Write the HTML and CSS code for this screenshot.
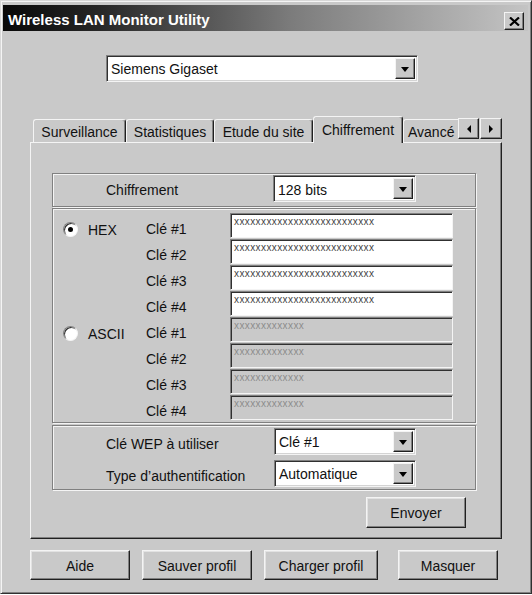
FILE: index.html
```html
<!DOCTYPE html>
<html lang="fr">
<head>
  <meta charset="UTF-8" />
  <title>Wireless LAN Monitor Utility</title>
  <link rel="stylesheet" href="styles.css">
</head>
<body>

  <div class="window">
    <div class="titlebar">
      <span class="title">Wireless LAN Monitor Utility</span>
      <div class="close-btn">
        <svg width="11" height="9" viewBox="0 0 11 9"><path d="M1 0.5 L10 8.5 M10 0.5 L1 8.5" stroke="#000" stroke-width="2.2" fill="none"/></svg>
      </div>
    </div>

    <div class="window-body">
      <div class="combo profile-combo">
        <span class="combo-value">Siemens Gigaset</span>
        <span class="drop-btn"></span>
      </div>

      <div class="tabs">
        <div class="tab tab-surv">Surveillance</div>
        <div class="tab tab-stats">Statistiques</div>
        <div class="tab tab-site">Etude du site</div>
        <div class="tab tab-active">Chiffrement</div>
        <div class="tab tab-cut">Avancé</div>
        <div class="tab-arrow arrow-left"><span class="tri-left"></span></div>
        <div class="tab-arrow arrow-right"><span class="tri-right"></span></div>
      </div>

      <div class="panel">
        <div class="group group-cipher">
          <span>Chiffrement</span>
          <div class="combo">
            <span class="combo-value">128 bits</span>
            <span class="drop-btn"></span>
          </div>
        </div>

        <div class="group group-keys">
          <div class="radio-option"><span class="radio checked"></span>HEX</div>
          <span class="key-label">Clé #1</span>
          <div class="key-field">xxxxxxxxxxxxxxxxxxxxxxxxxx</div>

          <span></span>
          <span class="key-label">Clé #2</span>
          <div class="key-field">xxxxxxxxxxxxxxxxxxxxxxxxxx</div>

          <span></span>
          <span class="key-label">Clé #3</span>
          <div class="key-field">xxxxxxxxxxxxxxxxxxxxxxxxxx</div>

          <span></span>
          <span class="key-label">Clé #4</span>
          <div class="key-field">xxxxxxxxxxxxxxxxxxxxxxxxxx</div>

          <div class="radio-option"><span class="radio"></span>ASCII</div>
          <span class="key-label">Clé #1</span>
          <div class="key-field disabled">xxxxxxxxxxxxx</div>

          <span></span>
          <span class="key-label">Clé #2</span>
          <div class="key-field disabled">xxxxxxxxxxxxx</div>

          <span></span>
          <span class="key-label">Clé #3</span>
          <div class="key-field disabled">xxxxxxxxxxxxx</div>

          <span></span>
          <span class="key-label">Clé #4</span>
          <div class="key-field disabled">xxxxxxxxxxxxx</div>
        </div>

        <div class="group group-wep">
          <span class="wep-label">Clé WEP à utiliser</span>
          <div class="combo">
            <span class="combo-value">Clé #1</span>
            <span class="drop-btn"></span>
          </div>
          <span class="wep-label">Type d’authentification</span>
          <div class="combo">
            <span class="combo-value">Automatique</span>
            <span class="drop-btn"></span>
          </div>
        </div>

        <div class="panel-actions">
          <div class="btn btn-send">Envoyer</div>
        </div>
      </div>

      <div class="footer-buttons">
        <div class="btn btn-help">Aide</div>
        <div class="btn btn-save">Sauver profil</div>
        <div class="btn btn-load">Charger profil</div>
        <div class="btn btn-hide">Masquer</div>
      </div>
    </div>
  </div>

</body>
</html>
```

FILE: styles.css
```css
* {
  box-sizing: border-box;
  margin: 0;
  padding: 0;
}

body {
  background: #fff;
  font-family: "Liberation Sans", Arial, sans-serif;
  font-size: 14px;
  color: #111;
}

.window {
  width: 532px;
  height: 594px;
  background: #c9c9c9;
  border: 1px solid;
  border-color: #d8d8d8 #303030 #303030 #d8d8d8;
  box-shadow: inset 1px 1px 0 #f4f4f4, inset -1px -1px 0 #808080;
  padding: 4px 3px 0 2px;
}

/* Title bar */
.titlebar {
  height: 26px;
  display: flex;
  align-items: center;
  justify-content: space-between;
  padding: 0 4px 0 5px;
  background: linear-gradient(to right, #080808, #262626 18%, #7c7c7c 55%, #c4c4c4);
}

.title {
  color: #fff;
  font-weight: bold;
  font-size: 15px;
  padding-top: 3px;
}

.close-btn {
  width: 20px;
  height: 18px;
  margin-top: 6px;
  display: flex;
  align-items: center;
  justify-content: center;
  background: #c9c9c9;
  border: 1px solid;
  border-color: #f4f4f4 #202020 #202020 #f4f4f4;
  box-shadow: inset -1px -1px 0 #808080;
}

.window-body {
  padding-left: 27px;
}

/* Combo boxes */
.combo {
  display: flex;
  align-items: center;
  height: 27px;
  background: #fff;
  border: 1px solid;
  border-color: #808080 #f4f4f4 #f4f4f4 #808080;
  box-shadow: inset 1px 1px 0 #303030, inset -1px -1px 0 #d4d4d4;
  padding: 2px 2px 2px 4px;
}

.combo-value {
  flex: 1;
  white-space: nowrap;
}

.drop-btn {
  width: 20px;
  height: 100%;
  display: flex;
  align-items: center;
  justify-content: center;
  background: #c9c9c9;
  border: 1px solid;
  border-color: #f4f4f4 #202020 #202020 #f4f4f4;
  box-shadow: inset -1px -1px 0 #808080;
}

.drop-btn::before {
  content: "";
  border-left: 4px solid transparent;
  border-right: 4px solid transparent;
  border-top: 5px solid #000;
  margin-top: 1px;
}

.profile-combo {
  width: 312px;
  margin: 24px 0 0 76px;
}

/* Tabs */
.tabs {
  display: flex;
  align-items: flex-end;
  height: 26px;
  width: 472px;
  margin-top: 34px;
  padding-left: 3px;
}

.tab {
  height: 23px;
  display: flex;
  align-items: center;
  justify-content: center;
  padding-top: 2px;
  white-space: nowrap;
  border: 1px solid;
  border-bottom: none;
  border-color: #f4f4f4 #202020 transparent #f4f4f4;
  border-radius: 3px 3px 0 0;
  box-shadow: inset -1px 0 0 #808080;
}

.tab-surv { width: 93px; }
.tab-stats { width: 88px; }
.tab-site { width: 99px; }

.tab-active {
  width: 90px;
  height: 27px;
  margin-bottom: -1px;
  padding-top: 0;
  position: relative;
  z-index: 1;
  background: #c9c9c9;
}

.tab-cut {
  width: 55px;
  justify-content: flex-start;
  padding-left: 4px;
  overflow: hidden;
  border-right: none;
  box-shadow: none;
  border-top-right-radius: 0;
}

.tab-arrow {
  width: 21px;
  height: 21px;
  align-self: flex-start;
  margin-top: 2px;
  display: flex;
  align-items: center;
  justify-content: center;
  background: #c9c9c9;
  border: 1px solid;
  border-color: #f4f4f4 #202020 #202020 #f4f4f4;
  box-shadow: inset -1px -1px 0 #808080;
}

.arrow-right {
  width: 22px;
  margin-left: 1px;
}

.tri-left {
  border-top: 4px solid transparent;
  border-bottom: 4px solid transparent;
  border-right: 4px solid #000;
}

.tri-right {
  border-top: 4px solid transparent;
  border-bottom: 4px solid transparent;
  border-left: 4px solid #000;
}

/* Tab panel */
.panel {
  width: 472px;
  height: 397px;
  border: 1px solid;
  border-color: #f4f4f4 #202020 #202020 #f4f4f4;
  box-shadow: inset -1px -1px 0 #808080;
  padding: 30px 0 0 21px;
}

.group {
  width: 424px;
  border: 1px solid #808080;
  box-shadow: inset 1px 1px 0 #f4f4f4, 1px 1px 0 #f4f4f4;
}

.group-cipher {
  display: grid;
  grid-template-columns: 167px 143px;
  align-items: center;
  padding: 1px 0 4px 53px;
}

.group-cipher span:first-child {
  padding-top: 2px;
}

.group-keys {
  margin-top: 1px;
  display: grid;
  grid-template-columns: 83px 84px 223px;
  grid-auto-rows: 25px;
  row-gap: 1px;
  align-items: center;
  padding: 4px 0 2px 10px;
}

.radio-option {
  display: flex;
  align-items: center;
  gap: 10px;
  padding-top: 8px;
}

.radio {
  width: 15px;
  height: 15px;
  border-radius: 50%;
  display: flex;
  align-items: center;
  justify-content: center;
  background: #fff;
  border: 1px solid;
  border-color: #808080 #f4f4f4 #f4f4f4 #808080;
  box-shadow: inset 1px 1px 0 #303030;
}

.radio.checked::after {
  content: "";
  width: 5px;
  height: 5px;
  border-radius: 50%;
  background: #000;
}

.key-label {
  padding-top: 6px;
}

.key-field {
  height: 25px;
  background: #fff;
  border: 1px solid;
  border-color: #808080 #f4f4f4 #f4f4f4 #808080;
  box-shadow: inset 1px 1px 0 #303030;
  font-size: 10px;
  line-height: 12px;
  letter-spacing: 0.4px;
  color: #444;
  padding: 2px 0 0 3px;
  overflow: hidden;
  white-space: nowrap;
}

.key-field.disabled {
  background: #c9c9c9;
  color: #8c8c8c;
}

.group-wep {
  margin-top: 2px;
  display: grid;
  grid-template-columns: 168px 142px;
  row-gap: 5px;
  align-items: center;
  padding: 2px 0 2px 53px;
}

.wep-label {
  padding-top: 4px;
}

.panel-actions {
  width: 424px;
  display: flex;
  justify-content: flex-end;
  padding-right: 10px;
  margin-top: 7px;
}

/* Buttons */
.btn {
  height: 31px;
  display: flex;
  align-items: center;
  justify-content: center;
  padding-top: 1px;
  background: #c9c9c9;
  border: 1px solid;
  border-color: #f4f4f4 #202020 #202020 #f4f4f4;
  box-shadow: inset -1px -1px 0 #808080, inset 1px 1px 0 #e2e2e2;
}

.btn-send { width: 100px; }

.footer-buttons {
  width: 468px;
  display: flex;
  gap: 12px;
  margin-top: 11px;
}

.footer-buttons .btn {
  height: 30px;
}

.btn-help { width: 100px; }
.btn-save { width: 110px; }
.btn-load { width: 114px; }

.btn-hide {
  width: 100px;
  margin-left: auto;
}
```
